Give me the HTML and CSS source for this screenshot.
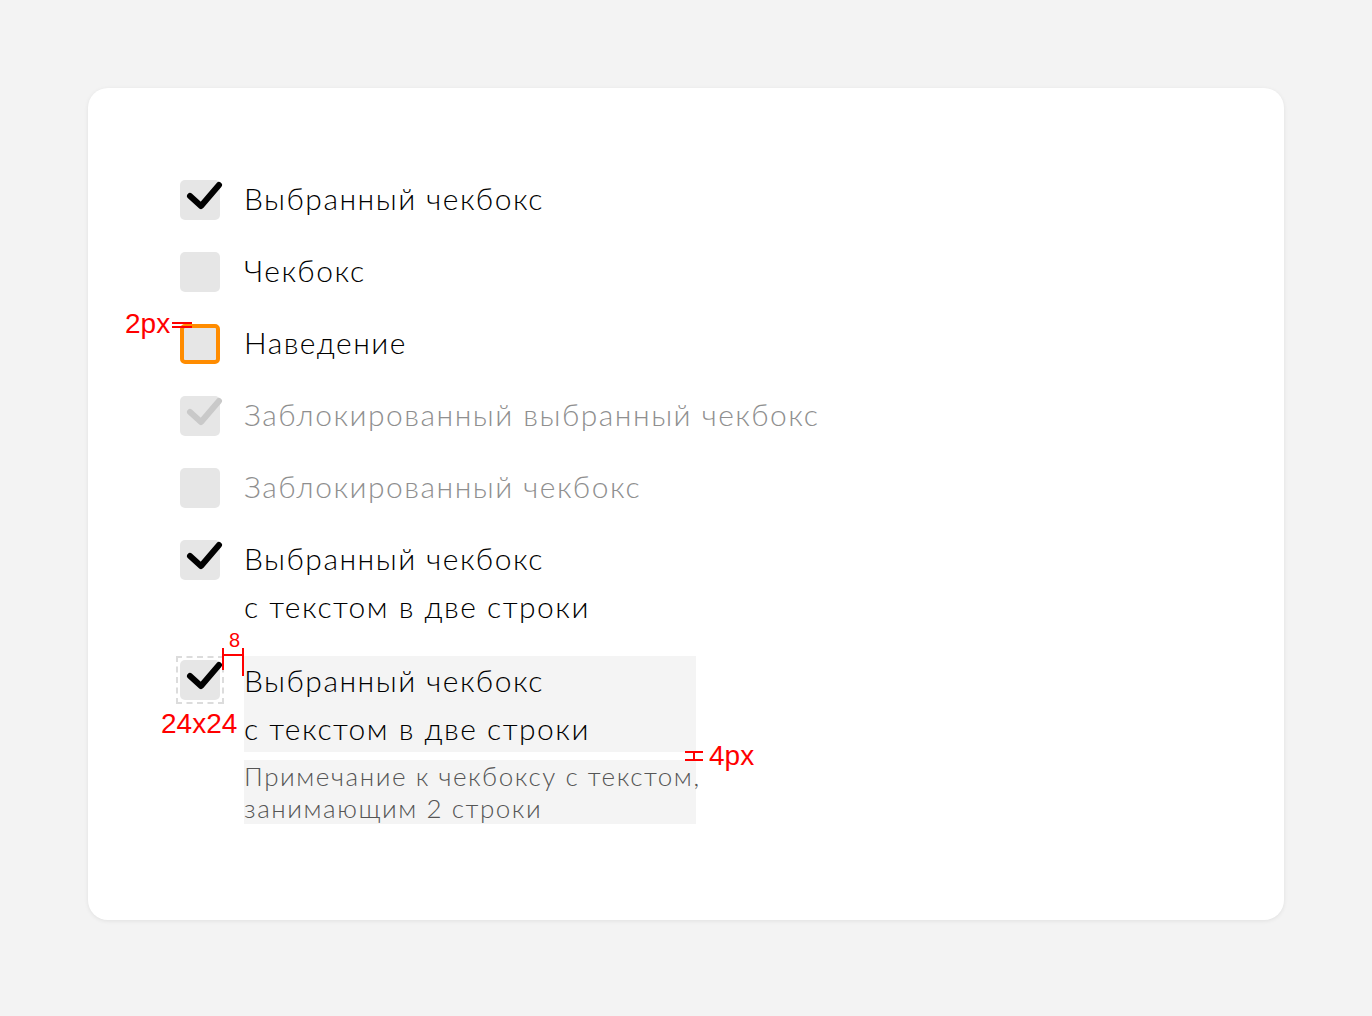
FILE: index.html
```html
<!DOCTYPE html>
<html lang="ru">
<head>
<meta charset="utf-8">
<title>Чекбоксы</title>
<link rel="stylesheet" href="styles.css">
</head>
<body>
<div class="card">
  <div class="item">
    <div class="control">
      <div class="box">
        <svg class="check" width="40" height="40" viewBox="0 0 40 40"><path d="M10 16 L21 26 L39 5" /></svg>
      </div>
    </div>
    <div class="label">Выбранный чекбокс</div>
  </div>
  <div class="item">
    <div class="control"><div class="box"></div></div>
    <div class="label">Чекбокс</div>
  </div>
  <div class="item">
    <div class="control"><div class="box hover"></div></div>
    <div class="label">Наведение</div>
    <span class="ann ann-2px">2px</span>
    <span class="ann-eq"></span>
  </div>
  <div class="item disabled">
    <div class="control">
      <div class="box">
        <svg class="check" width="40" height="40" viewBox="0 0 40 40"><path d="M10 16 L21 26 L39 5" /></svg>
      </div>
    </div>
    <div class="label">Заблокированный выбранный чекбокс</div>
  </div>
  <div class="item disabled">
    <div class="control"><div class="box"></div></div>
    <div class="label">Заблокированный чекбокс</div>
  </div>
  <div class="item">
    <div class="control">
      <div class="box">
        <svg class="check" width="40" height="40" viewBox="0 0 40 40"><path d="M10 16 L21 26 L39 5" /></svg>
      </div>
    </div>
    <div class="label">Выбранный чекбокс<br>с текстом в две строки</div>
  </div>
  <div class="item spec">
    <div class="control dashed">
      <div class="box">
        <svg class="check" width="40" height="40" viewBox="0 0 40 40"><path d="M10 16 L21 26 L39 5" /></svg>
      </div>
      <span class="ann ann-size">24x24</span>
    </div>
    <div class="content">
      <div class="label hl">Выбранный чекбокс<br>с текстом в две строки</div>
      <div class="note">Примечание к чекбоксу с текстом,<br>занимающим 2 строки</div>
    </div>
    <span class="ann-gap"></span>
    <span class="ann ann-8">8</span>
    <span class="ann-4"></span>
    <span class="ann ann-4px">4px</span>
  </div>
</div>
</body>
</html>
```
FILE: styles.css
```css
html, body {
  margin: 0;
  padding: 0;
}
body {
  background: #f3f3f3;
  font-family: Lato, "Noto Sans", sans-serif;
  width: 1372px;
  height: 1016px;
  overflow: hidden;
}
.card {
  box-sizing: border-box;
  margin: 88px 0 0 88px;
  width: 1196px;
  height: 832px;
  background: #fff;
  border-radius: 20px;
  box-shadow: 0 1px 4px rgba(0, 0, 0, 0.08);
  padding: 88px;
  display: flex;
  flex-direction: column;
  gap: 24px;
}
.item {
  display: flex;
  align-items: flex-start;
  gap: 20px;
  position: relative;
}
.control {
  width: 48px;
  height: 48px;
  flex: none;
  display: flex;
  align-items: center;
  justify-content: center;
  position: relative;
  box-sizing: border-box;
}
.control.dashed {
  border: 2px dashed #dcdcdc;
}
.box {
  width: 40px;
  height: 40px;
  border-radius: 5px;
  background: #e6e6e6;
  position: relative;
  box-sizing: border-box;
  flex: none;
}
.box.hover {
  border: 4px solid #ff8c00;
}
.check {
  position: absolute;
  left: 0;
  top: 0;
  overflow: visible;
}
.check path {
  fill: none;
  stroke: #000;
  stroke-width: 6;
  stroke-linecap: round;
  stroke-linejoin: round;
}
.disabled .check path {
  stroke: #c9c9c9;
}
.label {
  font-size: 30px;
  font-weight: 300;
  letter-spacing: 1.5px;
  line-height: 48px;
  color: #000;
  white-space: nowrap;
  margin: -2px 0 2px;
}
.disabled .label {
  color: #8f8f8f;
}
.content {
  display: flex;
  flex-direction: column;
  gap: 8px;
  width: 452px;
}
.label.hl {
  background: #f4f4f4;
  margin: 0;
}
.note {
  background: #f4f4f4;
  font-size: 26px;
  font-weight: 300;
  letter-spacing: 1.55px;
  line-height: 32px;
  color: #555;
  white-space: nowrap;
}
.ann {
  position: absolute;
  color: #ff0000;
  font-family: "Liberation Sans", Arial, sans-serif;
  font-size: 28px;
  line-height: 1;
  white-space: nowrap;
}
.ann-2px {
  left: -51px;
  top: -10px;
}
.ann-eq {
  position: absolute;
  left: -4px;
  top: 2px;
  width: 20px;
  height: 2px;
  border-top: 2px solid #ff0000;
  border-bottom: 2px solid #ff0000;
}
.ann-size {
  left: -17px;
  top: 52px;
}
.ann-gap {
  position: absolute;
  left: 46px;
  top: -8px;
  width: 18px;
  height: 22px;
  border-left: 2px solid #ff0000;
  border-right: 2px solid #ff0000;
}
.ann-gap::before {
  content: "";
  position: absolute;
  left: 0;
  right: 0;
  top: 6px;
  border-top: 2px solid #ff0000;
}
.ann-gap::after {
  content: "";
  position: absolute;
  right: -2px;
  top: 20px;
  height: 8px;
  border-right: 2px solid #ff0000;
}
.ann-8 {
  left: 53px;
  top: -26px;
  font-size: 20px;
}
.ann-4 {
  position: absolute;
  left: 509px;
  top: 95px;
  width: 18px;
  height: 6px;
  border-top: 2px solid #ff0000;
  border-bottom: 2px solid #ff0000;
}
.ann-4::before {
  content: "";
  position: absolute;
  left: 8px;
  top: 0;
  height: 6px;
  border-left: 2px solid #ff0000;
}
.ann-4px {
  left: 533px;
  top: 86px;
}
```
